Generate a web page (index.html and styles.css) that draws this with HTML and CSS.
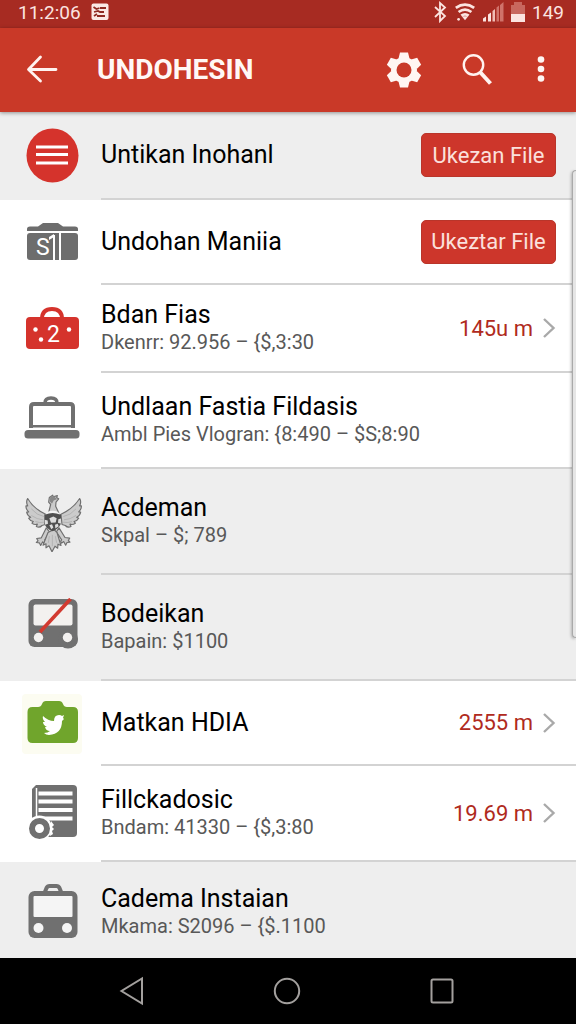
FILE: index.html
```html
<!DOCTYPE html>
<html lang="id">
<head>
<meta charset="utf-8">
<meta name="viewport" content="width=device-width, initial-scale=1">
<title>UNDOHESIN</title>
<link rel="stylesheet" href="styles.css">
</head>
<body>
<div class="status">
  <span>11:2:06</span>
  <svg width="18" height="18" viewBox="0 0 18 18" aria-hidden="true"><rect x="0.5" y="0.5" width="17" height="16.5" rx="2" fill="#fbe9e5"/><path d="M2.500 4l3 2 3-1M9 5h6M3 9l4-1 2 1h4M3 13l3-2M6 13h8" fill="none" stroke="#8f2a22" stroke-width="1.800"/></svg>
  <div class="status-icons">
    <svg width="14" height="22" viewBox="0 0 14 22" aria-hidden="true"><path d="M2 6l10 9-5 5V2l5 4.500L2 16" fill="none" stroke="#fbe4e0" stroke-width="1.800"/></svg>
    <svg width="22" height="20" viewBox="0 0 24 20" aria-hidden="true"><g fill="none" stroke="#fbe4e0" stroke-width="3"><path d="M2 5.500q10-7 20 0"/><path d="M5 10q7-5 14 0"/><path d="M8 14q4-3 8 0"/></g><path d="M8.500 14.500h7L12 19z" fill="#fbe4e0"/><circle cx="5" cy="18" r="1.500" fill="#fbe4e0"/></svg>
    <svg width="21" height="20" viewBox="0 0 21 20" aria-hidden="true"><path d="M0 19.500v-3l3-2v5zM5 19.500v-7l3-2v9z" fill="#fbe4e0"/><path d="M9.500 19.500V9l2.500-2v12.500z" fill="#f0bdb6"/><path d="M13.500 19.500V5.500l2.500-2v16zM17 19.500V3l3.500-3v19.500z" fill="#d0736a"/></svg>
    <svg width="14" height="20" viewBox="0 0 14 20" aria-hidden="true"><path d="M0 3h3V0h8v3h3v9H0z" fill="#c8675e"/><path d="M0 12h14v8H0z" fill="#fbe4e0"/></svg>
    <span>149</span>
  </div>
</div>

<header class="appbar">
  <button class="icon-btn" aria-label="Back"><svg width="32" height="30" viewBox="0 0 32 30"><path d="M30 14.500H3M14.500 2L2.500 14.500 14.500 26" fill="none" stroke="#fff3f0" stroke-width="2.800" stroke-linecap="round" stroke-linejoin="round"/></svg></button>
  <h1 class="appbar-title">UNDOHESIN</h1>
  <div class="actions">
    <button class="icon-btn" aria-label="Settings"><svg width="36" height="36" viewBox="-18 -18 36 36"><g fill="#fff6f3"><circle r="13"/><path id="tooth" d="M-4-17.500h8l1.500 6h-11z"/><use href="#tooth" transform="rotate(60)"/><use href="#tooth" transform="rotate(120)"/><use href="#tooth" transform="rotate(180)"/><use href="#tooth" transform="rotate(240)"/><use href="#tooth" transform="rotate(300)"/></g><circle r="7.500" fill="#c83929"/></svg></button>
    <button class="icon-btn" aria-label="Search"><svg width="32" height="34" viewBox="0 0 32 34"><circle cx="12.500" cy="12" r="9.700" fill="none" stroke="#fff3f0" stroke-width="2.400"/><path d="M19 19l10.500 11.500" stroke="#fff3f0" stroke-width="4"/></svg></button>
    <button class="icon-btn" aria-label="More options"><svg width="8" height="28" viewBox="0 0 8 28"><g fill="#fff6f3"><circle cx="4" cy="3.500" r="3.300"/><circle cx="4" cy="13" r="3.300"/><circle cx="4" cy="22.500" r="3.300"/></g></svg></button>
  </div>
</header>

<main class="content">
  <ul class="list">
    <li class="row shaded">
      <svg class="glyph" viewBox="0 0 60 60" aria-hidden="true"><ellipse cx="30.500" cy="29.500" rx="26" ry="27" fill="#d5332c"/><path d="M14 21h32M14 28.500h32M14 37h32" stroke="#fff" stroke-width="3"/></svg>
      <div class="body"><div class="text"><h2 class="name">Untikan Inohanl</h2></div><button class="pill">Ukezan File</button></div>
    </li>
    <li class="row compact">
      <svg class="glyph" viewBox="0 0 60 60" aria-hidden="true"><g fill="#6d6d6d"><path d="M5 18v-2q0-2.500 3-2.500h8l5-3.500h15l5 3.500h12q3 0 3 2.500v2z"/><rect x="5" y="20" width="51" height="27" rx="3"/></g><path d="M32 22v25M38 20v27" stroke="#fff" stroke-width="2"/><path d="M27 24l5-3v3l-5 3z" fill="#fff"/><text x="14" y="42" font-size="23" fill="#fff">S</text></svg>
      <div class="body"><div class="text"><h2 class="name">Undohan Maniia</h2></div><button class="pill">Ukeztar File</button></div>
    </li>
    <li class="row">
      <svg class="glyph" viewBox="0 0 60 60" aria-hidden="true"><path d="M20 20q0-10 10-10t10 10" fill="none" stroke="#d5332c" stroke-width="4"/><rect x="4" y="18" width="53" height="32" rx="4" fill="#d5332c"/><g fill="#fff"><circle cx="13.500" cy="30.500" r="2.200"/><circle cx="47" cy="30.500" r="2.200"/><circle cx="19" cy="40.500" r="2.200"/><text x="25" y="43" font-size="23">2</text></g></svg>
      <div class="body"><div class="text"><h2 class="name">Bdan Fias</h2><p class="sub">Dkenrr: 92.956 – {$,3:30</p></div><a class="more" href="#">145u m <svg width="14" height="22" viewBox="0 0 14 22" aria-hidden="true"><path d="M2 2l9.500 9L2 20" fill="none" stroke="#a9a9a9" stroke-width="2.400"/></svg></a></div>
    </li>
    <li class="row medium">
      <svg class="glyph" viewBox="0 0 60 60" aria-hidden="true"><g fill="none" stroke="#707070" stroke-width="4"><path d="M23 12q0-5 6-5t6 5" stroke-width="3.500"/><path d="M9 37V16q0-3 3-3h36q3 0 3 3v21"/></g><path d="M7 34h46v2.500H7z" fill="#707070"/><path d="M11 16h38v18H11z" fill="#fff"/><rect x="2.500" y="39" width="55" height="8.500" rx="3.500" fill="#707070"/></svg>
      <div class="body"><div class="text"><h2 class="name">Undlaan Fastia Fildasis</h2><p class="sub">Ambl Pies Vlogran: {8:490 – $S;8:90</p></div></div>
    </li>
    <li class="row shaded tall">
      <svg class="glyph" viewBox="21 37.500 180 180" aria-hidden="true">
        <g stroke="#6f6f6f" stroke-width="3.500" stroke-linejoin="round" fill="#cbcbcb">
          <path d="M92 104Q56 88 38 57q-6 10 0 22l-5 0q-1 10 8 18l-6 1q2 11 12 15l-6 3q5 9 14 10l-4 5q8 6 16 3l-3 7q10 5 17-3l10-3z"/>
          <path d="M138 104q36-16 56-47 6 10 0 22l5 0q1 10-8 18l6 1q-2 11-12 15l6 3q-5 9-14 10l4 5q-8 6-16 3l3 7q-10 5-17-3l-10-3z"/>
          <path d="M94 145l-15 30-14 2 4 7-5 5 9 1 4 8 6-11 5 5 4-6-3-4 15-24zM132 145l18 29 14 2-4 7 5 5-9 1-4 8-6-11-6 5-3-6 3-4-16-24z"/>
          <path d="M99 159L84 197l9-4 0 12 9-6 9 18 9-17 8 6 1-12 9 4-12-39-9-9z"/>
          <path d="M101 99l6-24-6-7 2-14 10-7 2 5 12-4-2 7 6 3-8 10-1 12 9 20-14 8z"/>
        </g>
        <path d="M106 52l12-2 8 9-10 4-5 10-7-8z" fill="#888"/>
        <path d="M88 105q25-13 50 0v27q-7 17-25 23-19-6-25-23z" fill="#505050"/>
        <path d="M91 105q4-10 22-11 18 1 22 11-22-9-44 0z" fill="#f3f3f3"/>
        <path d="M103 116l12-5 10 5-3 13-14 1zM89 121l9 2 1 10-9 3zM130 119l8-2v16l-9-3zM103 137l8-3 4 10-6 5zM120 136l8-3 3 7-10 7z" fill="#ddd"/>
        <path d="M49 88q17 20 38 23M49 108q17 12 36 13M61 126q12 5 27 2M183 88q-17 20-38 23M183 108q-17 12-36 13M171 126q-12 5-27 2M103 170l-3 20M112 166v34M121 170l4 20" fill="none" stroke="#a8a8a8" stroke-width="2"/>
      </svg>
      <div class="body"><div class="text"><h2 class="name">Acdeman</h2><p class="sub">Skpal – $; 789</p></div></div>
    </li>
    <li class="row shaded tall">
      <svg class="glyph" viewBox="0 0 60 60" aria-hidden="true"><rect x="6.500" y="1" width="49" height="48" rx="6" fill="#707070"/><ellipse cx="46" cy="41" rx="10" ry="9.500" fill="#707070"/><rect x="11.500" y="6.500" width="39" height="21" rx="2" fill="#f3f1ef"/><circle cx="16.500" cy="39.500" r="4.700" fill="#f3f1ef"/><circle cx="45.500" cy="39.500" r="4.700" fill="#f3f1ef"/><path d="M18 34L48.500 1" stroke="#d23a30" stroke-width="3.600"/></svg>
      <div class="body"><div class="text"><h2 class="name">Bodeikan</h2><p class="sub">Bapain: $1100</p></div></div>
    </li>
    <li class="row compact">
      <svg class="glyph" viewBox="0 0 60 60" aria-hidden="true"><rect width="60" height="60" rx="4" fill="#fcfcf1"/><path d="M5.500 18q0-5 5-5H16q3 0 4-3t4-3h13q3 0 4 3t4 3h6q5 0 5 5v26q0 5-5 5H10.500q-5 0-5-5z" fill="#70a52c"/><path d="M21 22q5 5 11 5 0-6 5-6 2 0 3 1l2-1-1 3 1 1-2 2q0 13-13 14-3 0-5-2 4 0 6-2-4 0-5-4h2q-4-2-4-5l2 0q-3-3-2-6z" fill="#fff"/></svg>
      <div class="body"><div class="text"><h2 class="name">Matkan HDIA</h2></div><a class="more" href="#">2555 m <svg width="14" height="22" viewBox="0 0 14 22" aria-hidden="true"><path d="M2 2l9.500 9L2 20" fill="none" stroke="#a9a9a9" stroke-width="2.400"/></svg></a></div>
    </li>
    <li class="row medium">
      <svg class="glyph" viewBox="0 0 60 60" aria-hidden="true"><path d="M14 1h37q4 0 4 4v44q0 4-4 4H14q-4 0-4-4V5z" fill="#707070"/><path d="M14.500 4v32" stroke="#fff" stroke-width="1.500"/><path d="M16.500 9.500h34M16.500 17.500h34M16.500 26h34M16.500 34.500h34" stroke="#fff" stroke-width="4.200"/><circle cx="17.500" cy="44" r="12.500" fill="#fff"/><path d="M29 37l3 4-2 2 2 2-2 2 1 3-3 2z" fill="#fff"/><circle cx="17.500" cy="44.500" r="7.500" fill="none" stroke="#707070" stroke-width="6"/></svg>
      <div class="body"><div class="text"><h2 class="name">Fillckadosic</h2><p class="sub">Bndam: 41330 – {$,3:80</p></div><a class="more" href="#">19.69 m <svg width="14" height="22" viewBox="0 0 14 22" aria-hidden="true"><path d="M2 2l9.500 9L2 20" fill="none" stroke="#a9a9a9" stroke-width="2.400"/></svg></a></div>
    </li>
    <li class="row shaded last">
      <svg class="glyph" viewBox="0 0 60 60" aria-hidden="true"><path d="M22.500 11l2-5q1-2 3-2h7q2 0 3 2l2 5" fill="none" stroke="#707070" stroke-width="4"/><rect x="6.500" y="9" width="49" height="47" rx="6" fill="#707070"/><rect x="11.500" y="14" width="39" height="21" rx="1" fill="#f5f5f5"/><circle cx="16.500" cy="46" r="5" fill="#f5f5f5"/><circle cx="45" cy="46" r="5" fill="#f5f5f5"/></svg>
      <div class="body"><div class="text"><h2 class="name">Cadema Instaian</h2><p class="sub">Mkama: S2096 – {$.1100</p></div></div>
    </li>
  </ul>
  <div class="edge-panel"></div>
</main>

<nav class="navbar" aria-label="System">
  <button class="icon-btn" aria-label="Back"><svg width="26" height="30" viewBox="0 0 26 30"><path d="M23 2.500v25L2.500 15z" fill="none" stroke="#a3a09e" stroke-width="2"/></svg></button>
  <button class="icon-btn" aria-label="Home"><svg width="30" height="30" viewBox="0 0 30 30"><circle cx="15" cy="15" r="12.200" fill="none" stroke="#a3a09e" stroke-width="2"/></svg></button>
  <button class="icon-btn" aria-label="Recent apps"><svg width="26" height="30" viewBox="0 0 26 30"><rect x="2.500" y="3.500" width="21" height="23" rx="1.500" fill="none" stroke="#a3a09e" stroke-width="2"/></svg></button>
</nav>
</body>
</html>
```
FILE: styles.css
```css
* { box-sizing: border-box; }

body {
  margin: 0;
  min-height: 100vh;
  display: flex;
  flex-direction: column;
  background: #fff;
  color: #000;
  font-family: Roboto, "Noto Sans", sans-serif;
}

h1, h2, p, ul { margin: 0; padding: 0; }

svg { display: block; flex: none; }

button { font: inherit; cursor: pointer; }

.icon-btn {
  display: flex;
  align-items: center;
  justify-content: center;
  padding: 0;
  border: 0;
  background: none;
}

.status {
  display: flex;
  align-items: center;
  gap: 10px;
  height: 28px;
  padding: 0 12px 4px 18px;
  background: #a72b22;
  color: #fbe4e0;
  font-size: 19px;
}

.status-icons {
  display: flex;
  align-items: center;
  gap: 7px;
  margin-left: auto;
}

.appbar {
  position: relative;
  z-index: 1;
  display: flex;
  align-items: center;
  height: 84px;
  padding: 0 31px 0 26px;
  background: #c93928;
  box-shadow: 0 1px 4px rgba(0, 0, 0, 0.4);
}

.appbar-title {
  margin-left: 39px;
  color: #fff8f6;
  font-size: 28px;
  line-height: 32px;
  font-weight: 700;
}

.actions {
  display: flex;
  align-items: center;
  gap: 44px;
  margin-left: auto;
}

.actions .icon-btn:first-child { margin-right: -5px; }

.content {
  position: relative;
  flex: 1;
  display: flex;
  flex-direction: column;
}

.list {
  flex: 1;
  display: flex;
  flex-direction: column;
  list-style: none;
}

.row {
  display: flex;
  align-items: center;
  gap: 19px;
  min-height: 88px;
  padding-left: 22px;
}

.compact { min-height: 85px; }
.medium { min-height: 96px; }
.tall { min-height: 106px; }
.shaded { background: #eee; }

.glyph {
  width: 60px;
  height: 60px;
}

.body {
  flex: 1;
  align-self: stretch;
  display: flex;
  align-items: center;
  justify-content: space-between;
  padding-right: 20px;
  border-bottom: 2px solid #d3d3d3;
}

.last {
  flex: 1;
  padding-top: 4px;
}

.last .body { border-bottom: 0; }

.name {
  font-size: 25px;
  line-height: 28px;
  font-weight: 400;
}

.sub {
  color: #585858;
  font-size: 20px;
  line-height: 26px;
}

.pill {
  min-width: 135px;
  height: 44px;
  padding: 0 8px;
  border: 1px solid #b9352a;
  border-radius: 5px;
  background: #cd362b;
  color: #fbe0dc;
  font-size: 22px;
}

.more {
  display: flex;
  align-items: center;
  gap: 9px;
  color: #b02a20;
  font-size: 22px;
  text-decoration: none;
}

.edge-panel {
  position: absolute;
  top: 58px;
  bottom: 320px;
  right: 0;
  width: 4px;
  border: 1px solid #aaa;
  border-right: 0;
  border-radius: 4px 0 0 4px;
  background: #e6e6e6;
  box-shadow: -1px 1px 3px rgba(0, 0, 0, 0.25);
}

.navbar {
  display: grid;
  grid-template-columns: repeat(3, 1fr);
  height: 66px;
  padding: 0 56px 0 54px;
  background: #000;
}
```
